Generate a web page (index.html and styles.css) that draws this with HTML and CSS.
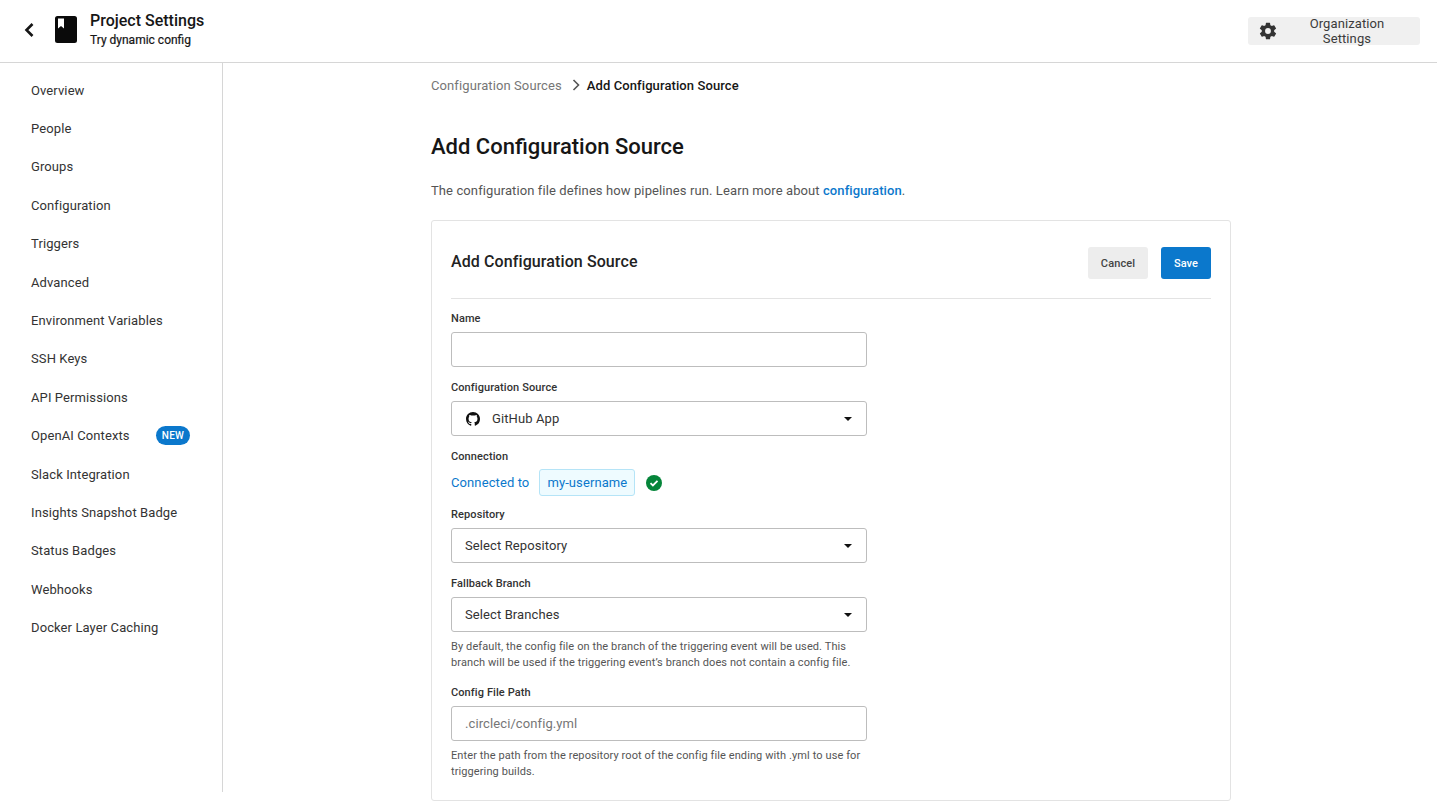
FILE: index.html
```html
<!DOCTYPE html>
<html lang="en">
<head>
<meta charset="utf-8">
<title>Add Configuration Source</title>
<link rel="stylesheet" href="styles.css">
</head>
<body>
<header class="topbar">
  <div class="topbar-left">
    <svg class="back" viewBox="0 0 12 16" width="12" height="16"><path d="M9.5 2 3.5 8l6 6" fill="none" stroke="#161616" stroke-width="2.6"/></svg>
    <svg class="book" viewBox="0 0 22 27" width="22" height="27"><path fill-rule="evenodd" d="M2.5 0h17A2.500 2.500 0 0 1 22 2.500v22a2.500 2.500 0 0 1-2.500 2.500h-17A2.500 2.500 0 0 1 0 24.500v-22A2.500 2.500 0 0 1 2.500 0ZM3 2.500v10l3-2.500 3 2.500v-10Z" fill="#0a0a0a"/></svg>
    <div class="project">
      <div class="project-title">Project Settings</div>
      <div class="project-sub">Try dynamic config</div>
    </div>
  </div>
  <button class="org-btn">
    <svg viewBox="0 0 24 24" width="20" height="20"><path fill="#333" d="M19.4 13c.04-.33.07-.66.07-1s-.03-.67-.07-1l2.110-1.650a.5.500 0 0 0 .12-.640l-2-3.460a.5.500 0 0 0-.610-.220l-2.490 1a7.300 7.300 0 0 0-1.690-.98l-.38-2.650A.490.490 0 0 0 14 2h-4a.490.490 0 0 0-.490.420l-.38 2.650c-.61.250-1.170.590-1.690.98l-2.490-1a.5.500 0 0 0-.610.220l-2 3.460a.490.490 0 0 0 .120.640L4.570 11c-.04.330-.07.670-.07 1s.03.670.07 1l-2.110 1.650a.5.500 0 0 0-.12.640l2 3.460c.12.220.39.300.610.220l2.490-1c.52.400 1.080.730 1.690.980l.38 2.650c.03.240.24.420.49.420h4c.25 0 .46-.18.490-.42l.38-2.650c.61-.25 1.170-.59 1.690-.98l2.490 1c.23.090.49 0 .61-.22l2-3.460a.5.500 0 0 0-.12-.64ZM12 15.500a3.500 3.500 0 1 1 0-7 3.500 3.500 0 0 1 0 7Z"/></svg>
    <span>Organization Settings</span>
  </button>
</header>
<div class="layout">
  <nav class="sidebar">
    <a class="nav-item">Overview</a>
    <a class="nav-item">People</a>
    <a class="nav-item">Groups</a>
    <a class="nav-item">Configuration</a>
    <a class="nav-item">Triggers</a>
    <a class="nav-item">Advanced</a>
    <a class="nav-item">Environment Variables</a>
    <a class="nav-item">SSH Keys</a>
    <a class="nav-item">API Permissions</a>
    <a class="nav-item">OpenAI Contexts<span class="badge">NEW</span></a>
    <a class="nav-item">Slack Integration</a>
    <a class="nav-item">Insights Snapshot Badge</a>
    <a class="nav-item">Status Badges</a>
    <a class="nav-item">Webhooks</a>
    <a class="nav-item">Docker Layer Caching</a>
  </nav>
  <main class="main">
    <div class="crumbs">
      <span class="crumb-link">Configuration Sources</span>
      <svg viewBox="0 0 8 12" width="8" height="12"><path d="M1.500 1 6.500 6l-5 5" fill="none" stroke="#555" stroke-width="1.600"/></svg>
      <span class="crumb-current">Add Configuration Source</span>
    </div>
    <h1 class="page-title">Add Configuration Source</h1>
    <p class="intro">The configuration file defines how pipelines run. Learn more about <a class="link">configuration</a>.</p>
    <section class="card">
      <div class="card-head">
        <h2 class="card-title">Add Configuration Source</h2>
        <div class="actions">
          <button class="btn btn-cancel">Cancel</button>
          <button class="btn btn-save">Save</button>
        </div>
      </div>
      <form class="form">
        <div class="field field-name">
          <div class="label">Name</div>
          <div class="control"></div>
        </div>
        <div class="field field-source">
          <div class="label">Configuration Source</div>
          <div class="control select">
            <svg class="gh" viewBox="0 0 16 16" width="14" height="14"><path fill="#111" d="M8 0C3.580 0 0 3.580 0 8c0 3.540 2.290 6.530 5.470 7.590.4.070.55-.17.55-.38 0-.19-.01-.82-.01-1.490-2.010.37-2.530-.49-2.690-.94-.09-.23-.48-.94-.82-1.130-.28-.15-.68-.52-.01-.53.630-.01 1.080.58 1.230.82.720 1.210 1.870.87 2.330.66.070-.52.280-.87.510-1.070-1.780-.2-3.640-.89-3.640-3.950 0-.87.310-1.590.820-2.150-.08-.2-.36-1.020.08-2.120 0 0 .67-.21 2.200.82.64-.18 1.320-.27 2-.27s1.360.09 2 .27c1.530-1.040 2.200-.82 2.200-.82.44 1.100.16 1.920.08 2.120.51.560.82 1.270.82 2.150 0 3.070-1.870 3.750-3.650 3.950.29.250.54.730.54 1.480 0 1.070-.01 1.930-.01 2.200 0 .21.150.46.55.38A8.010 8.010 0 0 0 16 8c0-4.420-3.580-8-8-8Z"/></svg>
            <span class="value">GitHub App</span>
            <span class="caret"></span>
          </div>
        </div>
        <div class="field field-conn">
          <div class="label">Connection</div>
          <div class="conn-row">
            <span class="conn-text">Connected to</span>
            <span class="chip">my-username</span>
            <svg viewBox="0 0 16 16" width="16" height="16"><circle cx="8" cy="8" r="8" fill="#05853a"/><path d="m4.500 8.200 2.400 2.300 4.600-4.700" fill="none" stroke="#fff" stroke-width="1.800"/></svg>
          </div>
        </div>
        <div class="field field-repo">
          <div class="label">Repository</div>
          <div class="control select"><span class="value">Select Repository</span><span class="caret"></span></div>
        </div>
        <div class="field field-branch">
          <div class="label">Fallback Branch</div>
          <div class="control select"><span class="value">Select Branches</span><span class="caret"></span></div>
          <p class="help">By default, the config file on the branch of the triggering event will be used. This branch will be used if the triggering event’s branch does not contain a config file.</p>
        </div>
        <div class="field field-path">
          <div class="label">Config File Path</div>
          <div class="control select"><span class="placeholder">.circleci/config.yml</span></div>
          <p class="help">Enter the path from the repository root of the config file ending with .yml to use for triggering builds.</p>
        </div>
      </form>
    </section>
  </main>
</div>
</body>
</html>
```
FILE: styles.css
```css
* { box-sizing: border-box; }
html, body { margin: 0; height: 100%; }
body {
  font-family: Roboto, "Liberation Sans", sans-serif;
  color: #333;
  background: #fff;
  overflow: hidden;
}
.topbar {
  height: 63px;
  border-bottom: 1px solid #d6d6d6;
  display: flex;
  align-items: center;
  justify-content: space-between;
  padding: 0 17px 3px 23px;
}
.topbar-left { display: flex; align-items: center; }
.back { margin-right: 20px; }
.book { margin-right: 13px; }
.project-title { font-size: 16px; font-weight: 500; line-height: 20px; color: #161616; }
.project-sub { font-size: 12px; font-weight: 400; line-height: 16px; color: #161616; margin-top: 1px; -webkit-text-stroke: 0.2px #161616; }
.org-btn {
  display: flex;
  align-items: center;
  gap: 6px;
  height: 28px;
  width: 172px;
  padding: 0 10px;
  border: 0;
  border-radius: 3px;
  background: #f0f0f0;
  font: 400 13px Roboto, sans-serif;
  letter-spacing: 0.1px;
  color: #3b3b3b;
  margin-top: 3px;
}
.layout { display: flex; align-items: flex-start; }
.sidebar {
  width: 223px;
  height: 729px;
  flex: none;
  border-right: 1px solid #d6d6d6;
  padding: 8px 32px 0 31px;
}
.nav-item {
  display: flex;
  align-items: center;
  justify-content: space-between;
  height: 38.400px;
  font-size: 13px;
  letter-spacing: 0.1px;
  color: #333;
}
.badge {
  font-size: 10px;
  font-weight: 500;
  letter-spacing: 0.3px;
  color: #fff;
  background: #0b78cc;
  border-radius: 10px;
  width: 34px;
  height: 19px;
  display: flex;
  align-items: center;
  justify-content: center;
}
.main { width: 800px; margin-left: 208px; flex: none; }
.crumbs {
  display: flex;
  align-items: center;
  gap: 7px;
  height: 44px;
  font-size: 13px;
  letter-spacing: 0.1px;
}
.crumbs svg { margin: 0 0 0 3px; }
.crumb-link { color: #767676; }
.crumb-current { color: #161616; font-weight: 500; margin-left: 0; }
.page-title {
  margin: 25px 0 0;
  font-size: 22px;
  font-weight: 500;
  line-height: 30px;
  color: #161616;
}
.intro {
  margin: 19px 0 0;
  font-size: 13px;
  line-height: 20px;
  letter-spacing: 0.1px;
  color: #555;
}
.link { color: #0b78cc; font-weight: 500; }
.card {
  margin-top: 19px;
  height: 581px;
  border: 1px solid #e3e3e3;
  border-radius: 3px;
  padding: 0 19px;
}
.card-head {
  height: 78px;
  border-bottom: 1px solid #e3e3e3;
  display: flex;
  align-items: flex-start;
  justify-content: space-between;
  padding-top: 26px;
}
.card-title {
  margin: 0;
  font-size: 16px;
  font-weight: 500;
  line-height: 28px;
  letter-spacing: 0.1px;
  color: #222;
  margin-top: 1px;
}
.actions { display: flex; gap: 13px; }
.btn {
  height: 32px;
  border: 0;
  border-radius: 3px;
  font: 500 11px Roboto, sans-serif;
  letter-spacing: 0.1px;
}
.btn-cancel { width: 60px; background: #ededed; color: #444; }
.btn-save { width: 50px; background: #0b78cc; color: #fff; }
.form { width: 416px; }
.label {
  font-size: 11px;
  font-weight: 500;
  line-height: 14px;
  letter-spacing: 0.1px;
  color: #333;
}
.field-name { padding-top: 13px; }
.field-source { margin-top: 14px; }
.field-conn { margin-top: 14px; }
.field-repo { margin-top: 12px; }
.field-branch { margin-top: 14px; }
.field-path { margin-top: 15px; }
.control {
  margin-top: 6px;
  height: 35px;
  border: 1px solid #bdbdbd;
  border-radius: 3px;
  background: #fff;
}
.select {
  display: flex;
  align-items: center;
  padding: 0 13px;
  font-size: 13px;
  letter-spacing: 0.1px;
  color: #333;
}
.gh { margin: 0 0 0 1px; }
.field-source .value { margin-left: 12px; }
.caret {
  margin-left: auto;
  width: 0;
  height: 0;
  margin-right: 1px;
  border-left: 4.500px solid transparent;
  border-right: 4.500px solid transparent;
  border-top: 4.500px solid #111;
}
.placeholder { color: #767676; }
.conn-row {
  display: flex;
  align-items: center;
  margin-top: 5px;
  height: 27px;
  font-size: 13px;
  letter-spacing: 0.1px;
}
.conn-text { color: #0b78cc; }
.chip {
  margin-left: 10px;
  height: 27px;
  padding: 0 7px;
  display: flex;
  align-items: center;
  color: #0b78cc;
  background: #eefbff;
  border: 1px solid #b5e4f7;
  border-radius: 3px;
}
.conn-row svg { margin-left: 11px; }
.help {
  margin: 7px 0 0;
  font-size: 11px;
  line-height: 16px;
  letter-spacing: 0.1px;
  color: #555;
}
```
